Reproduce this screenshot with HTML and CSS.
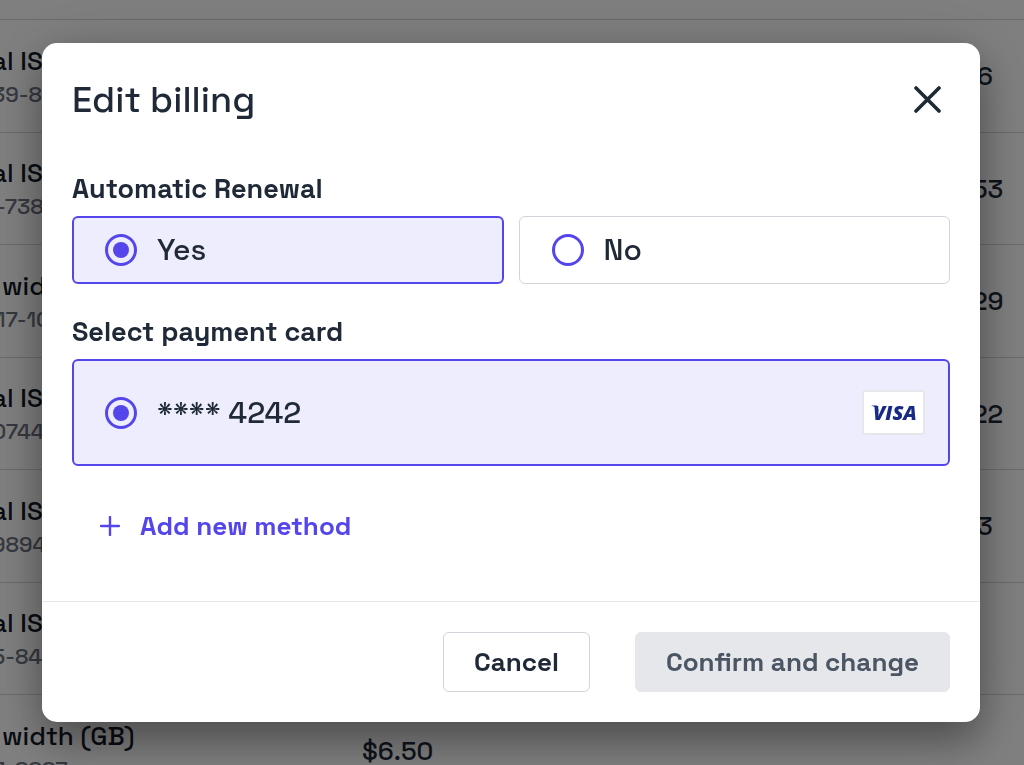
FILE: index.html
```html
<!DOCTYPE html>
<html lang="en">
<head>
    <meta charset="UTF-8">
    <meta name="viewport" content="width=device-width, initial-scale=1.0">
    <title>Edit billing</title>
    <link rel="stylesheet" href="styles.css">
</head>
<body>
    <table class="orders">
        <tbody>
            <tr><td class="name">al IS<small>39-8</small></td><td class="price"></td><td class="total total-short">6</td></tr>
            <tr><td class="name">al IS<small class="id-narrow">-738</small></td><td class="price"></td><td class="total">53</td></tr>
            <tr><td class="name name-gb">wid<small class="id-narrow">17-10</small></td><td class="price"></td><td class="total">29</td></tr>
            <tr><td class="name">al IS<small>0744</small></td><td class="price"></td><td class="total">22</td></tr>
            <tr><td class="name">al IS<small>9894</small></td><td class="price"></td><td class="total total-short">3</td></tr>
            <tr><td class="name">al IS<small>5-847</small></td><td class="price"></td><td class="total"></td></tr>
            <tr><td class="name name-gb">width (GB)<small>3-8887</small></td><td class="price">$6.50</td><td class="total"></td></tr>
        </tbody>
    </table>

    <div class="overlay">
        <form class="modal" role="dialog" aria-labelledby="modalTitle">
            <div class="modal-header">
                <h1 id="modalTitle">Edit billing</h1>
                <button type="button" class="close" aria-label="Close">
                    <svg width="28" height="28" viewBox="0 0 28 28" fill="none" stroke="currentColor" stroke-width="3.6" stroke-linecap="round">
                        <path d="M2 2L25 25M25 2L2 25" />
                    </svg>
                </button>
            </div>

            <div class="modal-body">
                <fieldset>
                    <legend>Automatic Renewal</legend>
                    <div class="options">
                        <label class="option">
                            <input type="radio" name="renewal" value="yes" checked>
                            <span>Yes</span>
                        </label>
                        <label class="option">
                            <input type="radio" name="renewal" value="no">
                            <span>No</span>
                        </label>
                    </div>
                </fieldset>

                <fieldset>
                    <legend>Select payment card</legend>
                    <label class="option option-card">
                        <input type="radio" name="card" value="4242" checked>
                        <span>**** 4242</span>
                        <svg class="card-brand" width="63" height="45" viewBox="0 0 63 45" role="img" aria-label="Visa">
                            <rect x="1" y="1" width="61" height="43" rx="2" fill="#fff" stroke="#e5e7eb" stroke-width="2" />
                            <path d="M9 15.5h6l2 6c-1.5-3-4-5-8-6z" fill="#172b85" />
                            <text x="11" y="30" class="visa">VISA</text>
                        </svg>
                    </label>
                </fieldset>

                <button type="button" class="add-method">
                    <svg width="20" height="20" viewBox="0 0 20 20" fill="none" stroke="currentColor" stroke-width="2.4" stroke-linecap="round">
                        <path d="M10 1V19M1 10H19" />
                    </svg>
                    Add new method
                </button>
            </div>

            <div class="modal-footer">
                <button type="button" class="btn">Cancel</button>
                <button type="submit" class="btn btn-confirm" disabled>Confirm and change</button>
            </div>
        </form>
    </div>
</body>
</html>
```

FILE: styles.css
```css
* {
    box-sizing: border-box;
}
body {
    margin: 0;
    height: 100vh;
    overflow: hidden;
    font-family: "Space Grotesk", Inter, "Liberation Sans", sans-serif;
    color: #1f2937;
    background-color: white;
}
button {
    font: inherit;
    color: inherit;
    cursor: pointer;
}

/* Orders list behind the dialog */
.orders {
    width: 100%;
    margin-top: 19px;
    table-layout: fixed;
    border-collapse: collapse;
    border-top: 1px solid #d1d5db;
    font-size: 26px;
}
.orders tr {
    height: 112px;
    border-bottom: 1px solid #d1d5db;
}
.orders tr:nth-child(odd) {
    height: 113px;
}
.orders td {
    padding: 0;
    white-space: nowrap;
}
.orders .name {
    width: 362px;
    padding-top: 3px;
    text-indent: -8px;
    color: #111827;
    font-weight: 500;
    line-height: 33px;
}
.orders .name-gb {
    text-indent: 2px;
}
.orders small {
    display: block;
    text-indent: -8px;
    font-size: 22px;
    font-weight: 500;
    color: #6b7280;
}
.orders .id-narrow {
    text-indent: -4px;
}
.orders .price,
.orders .total {
    font-weight: 500;
}
.orders .total {
    width: 52px;
}
.orders .total-short {
    text-indent: 5px;
}

.overlay {
    position: fixed;
    inset: 0;
    display: flex;
    align-items: center;
    padding: 0 44px 0 42px;
    background-color: rgba(0, 0, 0, 0.5);
}
.modal {
    width: 100%;
    background-color: white;
    border-radius: 15px;
    box-shadow: 0 20px 40px rgba(0, 0, 0, 0.32), 0 4px 60px rgba(0, 0, 0, 0.15);
}
.modal-header {
    display: flex;
    justify-content: space-between;
    align-items: center;
    padding: 30px;
}
.modal-header h1 {
    margin: 0;
    font-size: 36px;
    font-weight: 500;
    line-height: 54px;
}
.close {
    display: flex;
    padding: 8px;
    border: none;
    background: none;
}
.modal-body {
    display: flex;
    flex-direction: column;
    align-items: stretch;
    gap: 30px;
    padding: 14px 30px 45px;
}
fieldset {
    min-width: 0;
    margin: 0;
    padding: 0;
    border: none;
}
legend {
    padding: 0;
    margin-bottom: 9px;
    font-size: 27px;
    font-weight: 600;
    line-height: 36px;
}
.options {
    display: grid;
    grid-template-columns: 1fr 1fr;
    gap: 15px;
}
.option {
    display: flex;
    align-items: center;
    gap: 20px;
    min-height: 68px;
    padding: 0 24px 0 32px;
    border: 1px solid #d1d5db;
    border-radius: 6px;
    font-size: 30px;
    font-weight: 500;
    line-height: 36px;
    cursor: pointer;
}
.option:has(input:checked) {
    padding: 0 23px 0 31px;
    border: 2px solid #5546eb;
    background-color: #eeedfd;
}
.option-card {
    min-height: 107px;
}
.option input {
    appearance: none;
    width: 32px;
    height: 32px;
    margin: 0;
    border: 3px solid #5546eb;
    border-radius: 50%;
}
.option input:checked {
    background: #5546eb content-box;
    padding: 5px;
}
.card-brand {
    margin-left: auto;
}
.visa {
    font-family: "Open Sans", sans-serif;
    font-size: 20px;
    font-weight: 800;
    font-style: italic;
    fill: #172b85;
}
.add-method {
    display: flex;
    align-items: center;
    align-self: flex-start;
    gap: 20px;
    height: 60px;
    padding: 0 28px;
    border: none;
    background: none;
    color: #5546eb;
    font-size: 26px;
    font-weight: 700;
}
.modal-footer {
    display: flex;
    justify-content: flex-end;
    gap: 45px;
    padding: 30px;
    border-top: 1px solid #e5e7eb;
}
.btn {
    height: 60px;
    padding: 0 30px;
    border: 1px solid #d1d5db;
    border-radius: 6px;
    background-color: white;
    font-size: 26px;
    font-weight: 700;
}
.btn-confirm {
    border-color: #e5e7eb;
    background-color: #e5e7eb;
    color: #4b5563;
    cursor: default;
}
```
